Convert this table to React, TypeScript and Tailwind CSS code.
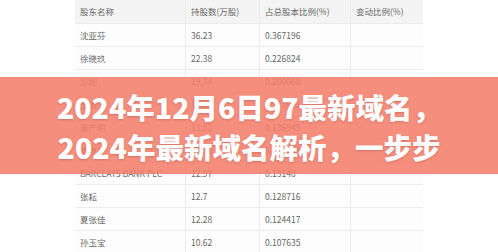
import React from 'react';

type Row = { name: string; shares: string; ratio: string; change: string };

const rows: Row[] = [
  { name: '沈亚芬', shares: '36.23', ratio: '0.367196', change: '' },
  { name: '徐晓玖', shares: '22.38', ratio: '0.226824', change: '' },
  { name: '彭刚', shares: '19.74', ratio: '0.200068', change: '' },
  { name: '王敏', shares: '17.55', ratio: '0.177811', change: '' },
  { name: '唐产明', shares: '13.51', ratio: '0.136945', change: '' },
  { name: '李晓艳', shares: '13.05', ratio: '0.132258', change: '' },
  { name: 'BARCLAYS BANK PLC', shares: '12.97', ratio: '0.13148', change: '' },
  { name: '张耘', shares: '12.7', ratio: '0.128716', change: '' },
  { name: '夏张佳', shares: '12.28', ratio: '0.124417', change: '' },
  { name: '孙玉宝', shares: '10.62', ratio: '0.107635', change: '' },
];

const cols = 'grid grid-cols-[111px_74px_91px_72px]';
const cell = 'flex items-center border-r border-[#ececec] pl-[5px] last:border-r-0';

export default function App() {
  return (
    <div
      className="relative h-[252px] w-[498px] overflow-hidden bg-white"
      style={{ fontFamily: '"Noto Sans CJK SC", "Noto Sans", sans-serif' }}
    >
      {/* 股东表格 */}
      <div className="ml-[75px] w-[348px] text-[8.5px] text-[#666]">
        <div className={`${cols} h-[24px] border-b border-[#ececec] bg-[#f4f4f4]`}>
          <div className={cell}>股东名称</div>
          <div className={cell}>持股数(万股)</div>
          <div className={cell}>占总股本比例(%)</div>
          <div className={cell}>变动比例(%)</div>
        </div>
        {rows.map((r) => (
          <div key={r.name} className={`${cols} h-[23px] border-b border-[#ececec] bg-[#fdfdfd]`}>
            <div className={cell}>{r.name}</div>
            <div className={cell}>{r.shares}</div>
            <div className={cell}>{r.ratio}</div>
            <div className={cell}>{r.change}</div>
          </div>
        ))}
      </div>

      {/* 标题横幅 */}
      <div className="absolute left-0 right-0 top-[77px] flex h-[97px] flex-col items-center justify-center bg-[#f47e6b]/[0.88] pt-[3px]">
        <h1
          className="text-center text-[28.5px] font-black leading-[40px] text-white"
          style={{ textShadow: '0 1px 2px rgba(120,40,30,0.25)' }}
        >
          2024年12月6日97最新域名，
          <br />
          2024年最新域名解析，一步步
        </h1>
      </div>
    </div>
  );
}
